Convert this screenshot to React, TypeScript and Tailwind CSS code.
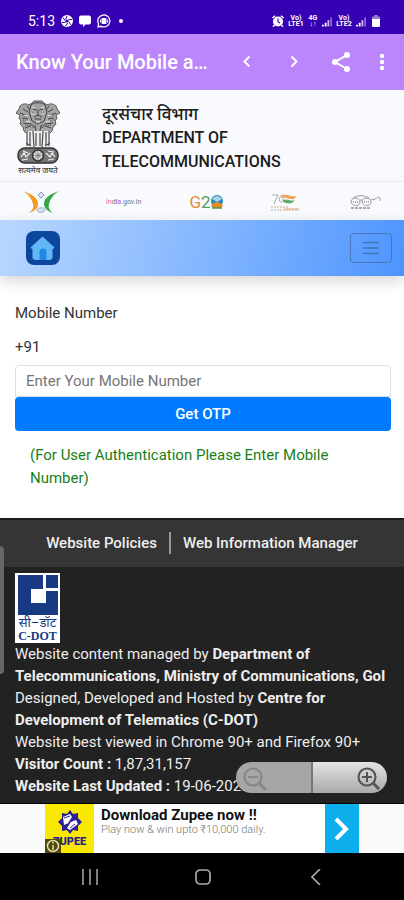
import { ReactNode } from 'react'

function SvgBox({ className, viewBox, children }: { className: string; viewBox: string; children: ReactNode }) {
  return (
    <svg className={`shrink-0 ${className}`} viewBox={viewBox} fill="none" aria-hidden="true">
      {children}
    </svg>
  )
}

function StatusBar() {
  return (
    <div className="flex h-[34px] items-center justify-between bg-[#3700b3] pt-2 pr-6 pl-7 text-white">
      <div className="flex items-center gap-[6px]">
        <span className="text-[14px] leading-4">5:13</span>
        <SvgBox className="h-3 w-3" viewBox="0 0 12 12">
          <circle cx="6" cy="6" r="6" fill="#fff" />
          <path d="M6 1 4.6 4.5M11 4.5 7.3 4.7M9.5 9.8 8 6.8M4.5 11 6.7 8.1M1 7.5 4.7 7.2M2 2.5 4 5.5" stroke="#3700b3" />
          <circle cx="6" cy="6" r="1.6" fill="#3700b3" />
        </SvgBox>
        <SvgBox className="h-3 w-3" viewBox="0 0 12 12">
          <path d="M2 .5h8a2 2 0 0 1 2 2v5a2 2 0 0 1-2 2H6.500L4 12V9.500H2a2 2 0 0 1-2-2v-5a2 2 0 0 1 2-2Z" fill="#fff" />
        </SvgBox>
        <SvgBox className="h-[14px] w-[14px]" viewBox="0 0 14 14">
          <path d="M1 13l.6-3.200A6 6 0 1 1 4.200 12.300Z" stroke="#fff" strokeWidth="1.300" />
          <rect x="4.500" y="4" width="5" height="6" rx="1" fill="#fff" />
          <path d="M3.500 5.500v3M10.700 5.500v3" stroke="#fff" />
        </SvgBox>
        <span className="ml-[2px] h-1 w-1 rounded-full bg-white" />
      </div>
      <div className="flex items-center gap-1">
        <SvgBox className="h-3 w-3" viewBox="0 0 12 12">
          <circle cx="6" cy="6.500" r="5" fill="#fff" />
          <path d="M.5 3 3 .7M11.500 3 9 .7M2.500 10 1 11.700M9.500 10l1.500 1.700" stroke="#fff" strokeWidth="1.500" />
          <path d="M6 3.500v3.200l2 1.300" stroke="#3700b3" strokeWidth="1.200" />
        </SvgBox>
        <span className="w-4 text-center text-[7px] leading-[6px] font-bold">Vo) LTE1</span>
        <span className="w-[10px] text-center text-[7px] leading-[6px] font-bold">4G ↓↑</span>
        <Signal />
        <span className="w-4 text-center text-[7px] leading-[6px] font-bold">Vo) LTE2</span>
        <Signal />
        <SvgBox className="ml-[2px] h-3 w-2" viewBox="0 0 8 12">
          <path d="M2.500 0h3v1.500H7a1 1 0 0 1 1 1V4H0V2.500a1 1 0 0 1 1-1h1.500Z" fill="#fff" opacity=".5" />
          <path d="M0 4h8v7a1 1 0 0 1-1 1H1a1 1 0 0 1-1-1Z" fill="#fff" />
        </SvgBox>
      </div>
    </div>
  )
}

function Signal() {
  return (
    <SvgBox className="h-[11px] w-[10px]" viewBox="0 0 11 11">
      <path d="M1 11V9M4 11V7" stroke="#fff" strokeWidth="2" />
      <path d="M7 11V4" stroke="#fff" strokeWidth="2" opacity=".75" />
      <path d="M10 11V1" stroke="#fff" strokeWidth="2" opacity=".4" />
    </SvgBox>
  )
}

function AppBar() {
  return (
    <div className="flex h-14 items-center bg-[#bb86fc] pr-3 pl-4 text-white">
      <h1 className="min-w-0 flex-1 truncate text-[20px] leading-6 font-medium">Know Your Mobile a…</h1>
      <div className="ml-4 flex items-center gap-[23px]">
        <button type="button" aria-label="Back">
          <SvgBox className="h-6 w-6" viewBox="0 0 24 24">
            <path d="m14.500 6.500-5 5 5 5" stroke="#fff" strokeWidth="2" />
          </SvgBox>
        </button>
        <button type="button" aria-label="Forward">
          <SvgBox className="h-6 w-6" viewBox="0 0 24 24">
            <path d="m9.500 6.500 5 5-5 5" stroke="#fff" strokeWidth="2" />
          </SvgBox>
        </button>
        <button type="button" aria-label="Share">
          <SvgBox className="h-6 w-6" viewBox="0 0 24 24">
            <path d="M18 5 6 12l12 7" stroke="#fff" strokeWidth="2" />
            <circle cx="18" cy="5" r="3" fill="#fff" />
            <circle cx="6" cy="12" r="3" fill="#fff" />
            <circle cx="18" cy="19" r="3" fill="#fff" />
          </SvgBox>
        </button>
        <button type="button" aria-label="More options" className="-ml-1">
          <SvgBox className="h-6 w-5" viewBox="0 0 20 24">
            <circle cx="10" cy="6" r="2.200" fill="#fff" />
            <circle cx="10" cy="12" r="2.200" fill="#fff" />
            <circle cx="10" cy="18" r="2.200" fill="#fff" />
          </SvgBox>
        </button>
      </div>
    </div>
  )
}

function Emblem() {
  return (
    <SvgBox className="h-[66px] w-11" viewBox="0 0 44 66">
      <path
        d="M16 3l2-2h8l2 2 3 2c4-2 7-1 9 1l1 3 3 4-4 2 1 3-2 3 1 3-3 3-1 4-3 3H11l-3-3-1-4-3-3 1-3-2-3 1-3-4-2 3-4 1-3c2-2 5-3 9-1Z"
        fill="#a4a4a4"
        stroke="#555"
      />
      <path
        d="M15 5c2-3 12-3 14 0l2 7-3 9-6 3-6-3-3-9ZM17 9l4 1M27 9l-4 1M22 10v5M18 17c2-2 6-2 8 0M19 19h6M7 9l5 3M4 13l6 2M6 18l6 1M7 23l7 1M9 28l6-2M37 9l-5 3M40 13l-6 2M38 18l-6 1M37 23l-7 1M35 28l-6-2M14 23l4 5M30 23l-4 5M19 25l1 6M25 25l-1 6M11 6l3 4M33 6l-3 4"
        stroke="#444"
      />
      <path d="M6 15l5 2M7 20l6 2M9 25l5 1M38 15l-5 2M37 20l-6 2M35 25l-5 1M16 12l4 8M28 12l-4 8M17 24l3 5M27 24l-3 5" stroke="#555" strokeDasharray="1 1" />
      <path d="M16 7l3 1M25 8l3-1M15 13l4 2M29 13l-4 2M20 22h4M8 15l4 1M36 15l-4 1M10 21l4 1M34 21l-4 1" stroke="#e4e4e4" />
      <path d="M10 31h24v17H10Z" fill="#eee" />
      <path d="M11 31v15M14 32v14M17 31l1 16M20 33v13M24 33v13M27 31l-1 16M30 32v14M33 31v15M10 43l5 3M34 43l-5 3" stroke="#4d4d4d" strokeWidth="1.200" />
      <rect x="2" y="48" width="40" height="15" rx="7" fill="#777" stroke="#333" strokeWidth="1.500" />
      <circle cx="22" cy="55.500" r="5.500" fill="#ddd" stroke="#333" strokeWidth="1.500" />
      <path d="M22 50v11M17 55.500h10M18.500 52l7 7M25.500 52l-7 7" stroke="#666" strokeWidth=".7" />
      <path d="M5 57l3-4 2 4 4-4M7 51l5 2M6 60l6-1M30 53l4 4 2-4 3 4M32 51l6 1M32 60l6-1" stroke="#eee" strokeWidth="1.200" />
    </SvgBox>
  )
}

function Header() {
  return (
    <header className="flex h-[92px] border-b border-[#e9ebf0] bg-[#f9fafd] pl-4">
      <div className="flex w-[86px] flex-col pt-[10px]">
        <Emblem />
        <span className="w-11 text-center text-[8px] leading-[10px] font-medium whitespace-nowrap text-[#444]">सत्यमेव जयते</span>
      </div>
      <h2 className="pt-3 text-[16px] leading-6 font-medium text-[#1c1c1c]">
        <span className="block text-[17px]">दूरसंचार विभाग</span>
        DEPARTMENT OF
        <br />
        TELECOMMUNICATIONS
      </h2>
    </header>
  )
}

function PartnerStrip() {
  return (
    <div className="flex h-[38px] items-center justify-around bg-[#f9fafd] pt-[2px]">
      <SvgBox className="h-6 w-9" viewBox="0 0 36 24">
        <path d="M0 1c9 3 15 7 15 13 0 4-3 7-9 9 4-3 5-6 4-9C9 9 5 4 0 1Z" fill="#f39a1f" />
        <path d="M36 1c-9 3-15 7-15 13 0 4 3 7 9 9-4-3-5-6-4-9 1-5 5-10 10-13Z" fill="#3aa545" />
        <path d="m18 2 3 3-3 3-3-3Z" fill="#dbe1f3" stroke="#8795c5" />
        <path d="M14 20c0-3 8-3 8 0s-8 3-8 0Z" fill="#d9def0" stroke="#9ca8cf" />
      </SvgBox>
      <span className="w-9 text-center text-[7px] leading-6 whitespace-nowrap text-gray-500">
        <span className="text-pink-400">In</span>di<span className="text-purple-500">a</span>.gov.in
      </span>
      <div className="flex w-9 items-center justify-center text-[17px] leading-5">
        <span className="text-[#e58a3c]">G</span>
        <span className="text-[#57a05c]">2</span>
        <SvgBox className="h-[14px] w-3" viewBox="0 0 12 14">
          <circle cx="6" cy="6" r="6" fill="#2785b8" />
          <path d="M1 4c3-4 7-4 10 0L6 7Z" fill="#a8d2eb" />
          <path d="M0 11c2-5 10-5 12 0l-2 2H2Z" fill="#e98b29" />
          <path d="M1 13h10" stroke="#4a9a50" strokeWidth="1.500" />
        </SvgBox>
      </div>
      <SvgBox className="h-5 w-8" viewBox="0 0 32 20">
        <path d="M2 3h6L4 12M13 3c-4 0-5 7-2 7s3-6-1-5" stroke="#aaa" />
        <path d="M12 3c6-1 9 2 15 1l-3 3c-5 1-7-2-12-1Z" fill="#f3a360" />
        <path d="M13 8c4-2 8 2 12 0l-3 3c-3 1-6 0-9-1Z" fill="#64ad68" />
        <path d="M1 15h17M1 18h28" stroke="#bcaea0" strokeDasharray="2 1" />
        <path d="M14 17h15" stroke="#e1a36e" />
      </SvgBox>
      <SvgBox className="h-5 w-8" viewBox="0 0 32 20">
        <path d="M2 9c1-4 9-4 9 1s-9 5-9-1ZM13 9c1-4 9-4 9 1s-9 5-9-1ZM4 6c5-3 11-3 16 0M22 7c5 3 5-4 9-1v3M11 8h2" stroke="#999" />
        <path d="M4 10h5M15 10h5" stroke="#aaa" strokeDasharray="1 1" strokeWidth="2" />
        <path d="M2 16h20" stroke="#aaa" strokeDasharray="3 1" strokeWidth="2" />
      </SvgBox>
    </div>
  )
}

function NavBar() {
  return (
    <nav className="z-10 flex h-14 items-center justify-between bg-linear-105 from-[#b9d7ff] to-[#4d94ff] pr-3 pl-[25px] shadow-[0_5px_14px_rgba(0,0,0,0.16)]">
      <a href="#home" aria-label="Home">
        <SvgBox className="h-9 w-9" viewBox="0 0 36 36">
          <rect x="1" y="1" width="34" height="34" rx="8" fill="#0d479d" />
          <path d="M17.500 6.500 29.500 17.500 28 19h-.5v8a3 3 0 0 1-3 3h-14a3 3 0 0 1-3-3v-8H7l-1.500-1.500Z" fill="#64b5f6" />
          <path d="M14.500 30v-8a3.500 3.500 0 0 1 7 0v8Z" fill="#1e88e5" />
        </SvgBox>
      </a>
      <button
        type="button"
        aria-label="Toggle navigation"
        className="flex h-[30px] w-[42px] items-center justify-center rounded border border-[#4977b5]"
      >
        <SvgBox className="h-4 w-4" viewBox="0 0 16 16">
          <path d="M0 2.500h16M0 8h16M0 13.500h16" stroke="#4275b8" strokeWidth="1.700" />
        </SvgBox>
      </button>
    </nav>
  )
}

function OtpForm() {
  return (
    <form className="bg-white pt-[26px] pr-[13px] pb-7 pl-[15px] text-[15px] leading-[23px] text-[#333]" onSubmit={(e) => e.preventDefault()}>
      <label htmlFor="mobile" className="block">
        Mobile Number
      </label>
      <div className="pt-[11px] pb-[6px]">+91</div>
      <input
        id="mobile"
        type="tel"
        placeholder="Enter Your Mobile Number"
        className="block h-8 w-full rounded-t border border-[#dddfe2] bg-white px-[10px] placeholder:text-[#757575]"
      />
      <button type="submit" className="block h-[34px] w-full rounded-sm bg-[#007bff] font-medium text-white">
        Get OTP
      </button>
      <p className="px-[15px] pt-[13px] text-[#188018]">(For User Authentication Please Enter Mobile Number)</p>
    </form>
  )
}

function CdotLogo() {
  return (
    <div className="flex h-[70px] w-[45px] flex-col items-center bg-white pt-[2px] text-[#173a82]">
      <SvgBox className="h-10 w-10" viewBox="0 0 40 40">
        <path d="M0 0h25v14H13v14h15V16h12v24H0ZM28 0h12v13H28Z" fill="#173a82" />
      </SvgBox>
      <span className="text-[13px] leading-[15px] whitespace-nowrap">सी–डॉट</span>
      <span className="font-['Liberation_Serif',serif] text-[12px] leading-3 font-bold whitespace-nowrap">C-DOT</span>
    </div>
  )
}

function Footer() {
  return (
    <footer className="relative flex-1 bg-[#222] text-[15px] leading-[22px] text-[#eee]">
      <div className="flex h-[49px] items-center justify-center border-t-2 border-[#1b1b1b] bg-[#353535] pb-[2px] font-medium">
        <a href="#policies" className="pr-3">
          Website Policies
        </a>
        <a href="#manager" className="border-l-2 border-[#999] pl-3">
          Web Information Manager
        </a>
      </div>
      <div className="px-[15px] pt-[6px] pb-1">
        <CdotLogo />
        <p>
          Website content managed by <b>Department of Telecommunications, Ministry of Communications, GoI</b>
        </p>
        <p>
          Designed, Developed and Hosted by <b>Centre for Development of Telematics (C-DOT)</b>
        </p>
        <p>Website best viewed in Chrome 90+ and Firefox 90+</p>
        <p>
          <b>Visitor Count :</b> 1,87,31,157
        </p>
        <p>
          <b>Website Last Updated :</b> 19-06-2023
        </p>
      </div>
      <div className="absolute top-7 left-0 h-[128px] w-1 rounded-r-sm bg-[#666]" />
      <ZoomControl />
    </footer>
  )
}

function ZoomControl() {
  return (
    <div className="absolute right-[17px] bottom-[10px] flex h-[31px] w-[151px] overflow-hidden rounded-full">
      <button type="button" aria-label="Zoom out" className="flex flex-1 items-center border-r-2 border-[#777] bg-[#a6a6a6] pl-[6px]">
        <SvgBox className="h-[26px] w-[26px]" viewBox="0 0 26 26">
          <circle cx="11" cy="12" r="8.500" stroke="#878787" strokeWidth="2.200" />
          <path d="M6 12h10" stroke="#878787" strokeWidth="2" />
          <path d="m17 18 7 7" stroke="#878787" strokeWidth="3" />
        </SvgBox>
      </button>
      <button
        type="button"
        aria-label="Zoom in"
        className="flex flex-1 items-center justify-end bg-linear-to-b from-[#e4e4e4] to-[#aaa] pr-[6px]"
      >
        <SvgBox className="h-[26px] w-[26px]" viewBox="0 0 26 26">
          <circle cx="12" cy="12" r="8.500" stroke="#555" strokeWidth="2.200" />
          <path d="M7 12h10M12 7v10" stroke="#555" strokeWidth="2" />
          <path d="m18 18 6 6" stroke="#555" strokeWidth="3" />
        </SvgBox>
      </button>
    </div>
  )
}

function AdBanner() {
  return (
    <div className="flex h-[50px] justify-center border-t border-black bg-[#fafafa]">
      <a href="#ad" className="flex w-[314px] bg-white">
        <span className="relative flex w-[49px] flex-col items-center bg-[#fbe800] pt-[6px]">
          <SvgBox className="h-6 w-6" viewBox="0 0 24 24">
            <path d="M12 0l3 4 5-1v5l4 4-4 4v5l-5-1-3 4-3-4-5 1v-5l-4-4 4-4V3l5 1Z" fill="#2b2097" />
            <path d="M5 7l7-3 2 3-4 6 8-3 2 4-8 6-3-2 4-6-7 3Z" fill="#fff" />
            <path d="M6 8l6-2M12 18l5-4" stroke="#2b2097" />
          </SvgBox>
          <span className="text-[11px] leading-4 font-black text-[#2b2097]">ZUPEE</span>
          <span className="absolute bottom-0 left-0 flex h-[14px] w-4 items-center justify-center bg-[#504a0d]">
            <SvgBox className="h-[14px] w-[14px]" viewBox="0 0 14 14">
              <circle cx="7" cy="7" r="5.500" stroke="#e4e0b0" strokeWidth="1.500" />
              <path d="M7 3v1.500M7 6v5" stroke="#e4e0b0" strokeWidth="1.500" />
            </SvgBox>
          </span>
        </span>
        <span className="flex-1 pt-[3px] pl-[7px] whitespace-nowrap">
          <strong className="block text-[15px] leading-4 text-[#111]">Download Zupee now !!</strong>
          <span className="block text-[11px] leading-[14px] font-light text-[#777]">Play now &amp; win upto ₹10,000 daily.</span>
        </span>
        <span className="flex w-[34px] items-center justify-center bg-[#0daeec]">
          <SvgBox className="h-6 w-4" viewBox="0 0 16 24">
            <path d="m2 2 10 10L2 22" stroke="#fff" strokeWidth="4" />
          </SvgBox>
        </span>
      </a>
    </div>
  )
}

function SystemNav() {
  return (
    <div className="flex h-[47px] items-center justify-around bg-black pr-8 pl-[34px]">
      <button type="button" aria-label="Recent apps">
        <SvgBox className="h-4 w-4" viewBox="0 0 16 16">
          <path d="M1 0v16M8 0v16M15 0v16" stroke="#aaa" strokeWidth="1.500" />
        </SvgBox>
      </button>
      <button type="button" aria-label="Home screen">
        <SvgBox className="h-4 w-4" viewBox="0 0 16 16">
          <rect x="1" y="1" width="14" height="14" rx="4" stroke="#aaa" strokeWidth="1.700" />
        </SvgBox>
      </button>
      <button type="button" aria-label="System back">
        <SvgBox className="h-4 w-4" viewBox="0 0 16 16">
          <path d="m12 0-8 8 8 8" stroke="#aaa" strokeWidth="1.700" />
        </SvgBox>
      </button>
    </div>
  )
}

export default function App() {
  return (
    <div className="flex min-h-screen flex-col bg-white font-[Roboto,'Noto_Sans',sans-serif]">
      <StatusBar />
      <AppBar />
      <Header />
      <PartnerStrip />
      <NavBar />
      <OtpForm />
      <Footer />
      <AdBanner />
      <SystemNav />
    </div>
  )
}
